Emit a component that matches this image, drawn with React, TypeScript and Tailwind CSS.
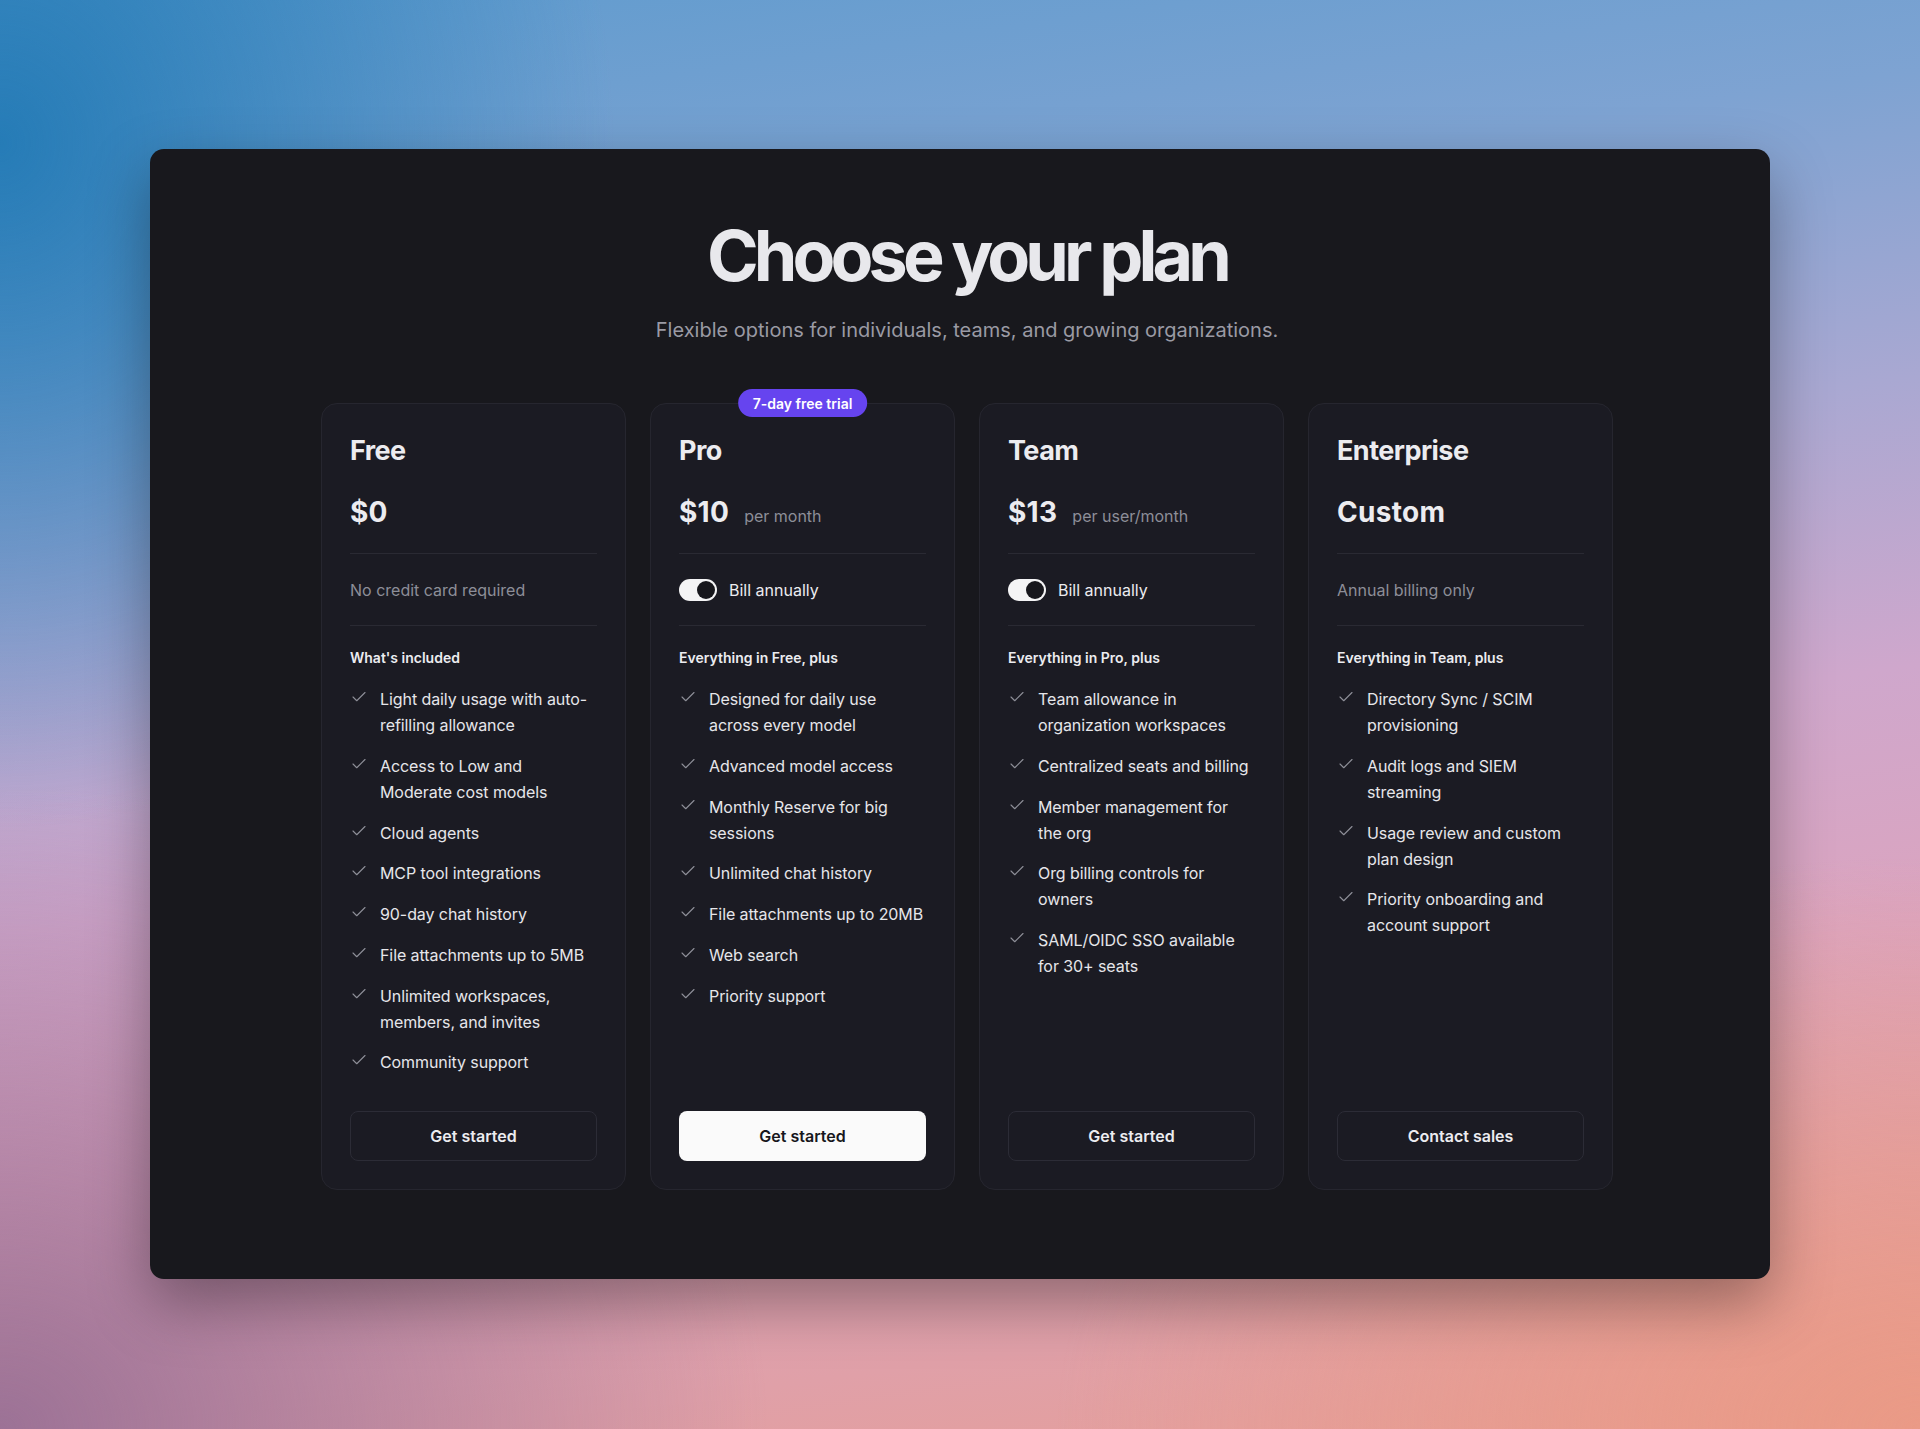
import React from 'react';
import { Check } from 'lucide-react';

interface Plan {
  name: string;
  price: string;
  unit?: string;
  note?: string;
  toggle?: boolean;
  badge?: string;
  heading: string;
  features: string[];
  cta: string;
  primary?: boolean;
}

const plans: Plan[] = [
  {
    name: 'Free',
    price: '$0',
    note: 'No credit card required',
    heading: "What's included",
    features: [
      'Light daily usage with auto-refilling allowance',
      'Access to Low and Moderate cost models',
      'Cloud agents',
      'MCP tool integrations',
      '90-day chat history',
      'File attachments up to 5MB',
      'Unlimited workspaces, members, and invites',
      'Community support',
    ],
    cta: 'Get started',
  },
  {
    name: 'Pro',
    price: '$10',
    unit: 'per month',
    toggle: true,
    badge: '7-day free trial',
    heading: 'Everything in Free, plus',
    features: [
      'Designed for daily use across every model',
      'Advanced model access',
      'Monthly Reserve for big sessions',
      'Unlimited chat history',
      'File attachments up to 20MB',
      'Web search',
      'Priority support',
    ],
    cta: 'Get started',
    primary: true,
  },
  {
    name: 'Team',
    price: '$13',
    unit: 'per user/month',
    toggle: true,
    heading: 'Everything in Pro, plus',
    features: [
      'Team allowance in organization workspaces',
      'Centralized seats and billing',
      'Member management for the org',
      'Org billing controls for owners',
      'SAML/OIDC SSO available for 30+ seats',
    ],
    cta: 'Get started',
  },
  {
    name: 'Enterprise',
    price: 'Custom',
    note: 'Annual billing only',
    heading: 'Everything in Team, plus',
    features: [
      'Directory Sync / SCIM provisioning',
      'Audit logs and SIEM streaming',
      'Usage review and custom plan design',
      'Priority onboarding and account support',
    ],
    cta: 'Contact sales',
  },
];

const PlanCard: React.FC<{ plan: Plan }> = ({ plan }) => {
  return (
    <div className="relative flex flex-col rounded-2xl border border-[#26262f] bg-[#1b1b23] px-[28px] pt-[30px] pb-[28px]">
      {plan.badge && (
        <div className="absolute left-1/2 top-[-15px] -translate-x-1/2 h-[28px] px-[15px] flex items-center rounded-full bg-[#6644ef] text-[14px] font-semibold text-white whitespace-nowrap">
          {plan.badge}
        </div>
      )}
      <h3 className="text-[27px] leading-[34px] font-bold tracking-[-0.02em] text-[#ececf0]">{plan.name}</h3>
      <div className="mt-[27px] mb-[24px] flex items-baseline gap-[15px]">
        <span className="text-[28px] leading-[34px] font-bold tracking-[0.01em] text-[#ececf0]">{plan.price}</span>
        {plan.unit && <span className="text-[16px] text-[#8d8e98]">{plan.unit}</span>}
      </div>
      <div className="border-t border-[#2a2a33] py-[23px] h-[72px] flex items-center">
        {plan.toggle ? (
          <div className="flex items-center gap-3">
            <div className="w-[38px] h-[22px] rounded-full bg-[#f4f4f5] flex items-center justify-end p-[2px]">
              <div className="size-[18px] rounded-full bg-[#17171c]" />
            </div>
            <span className="text-[16px] text-[#ececf0]">Bill annually</span>
          </div>
        ) : (
          <span className="text-[16px] text-[#8d8e98]">{plan.note}</span>
        )}
      </div>
      <div className="flex-1 border-t border-[#2a2a33] pt-[22px]">
        <p className="text-[14px] leading-[20px] font-semibold text-[#ececf0]">{plan.heading}</p>
        <ul className="mt-[18px] flex flex-col gap-[14.75px]">
          {plan.features.map((f) => (
            <li key={f} className="flex items-start gap-3">
              <Check size={18} strokeWidth={1.5} className="mt-[2px] shrink-0 text-[#8e8f98]" />
              <span className="text-[16px] leading-[26px] tracking-[-0.005em] text-[#e6e6ea]">{f}</span>
            </li>
          ))}
        </ul>
      </div>
      <button
        className={
          plan.primary
            ? 'mt-[36px] h-[50px] w-full rounded-lg bg-[#fafafa] text-[16px] font-semibold text-[#17171c]'
            : 'mt-[36px] h-[50px] w-full rounded-lg border border-[#2c2c36] bg-[#1b1b23] text-[16px] font-semibold text-[#ececf0]'
        }
      >
        {plan.cta}
      </button>
    </div>
  );
};

export default function App() {
  return (
    <div className="min-h-[1429px] w-full px-[150px] pt-[149px] pb-[150px] font-['Inter','Liberation_Sans',sans-serif] bg-[image:radial-gradient(ellipse_32%_48%_at_0%_10%,rgba(30,120,180,0.9)_0%,rgba(30,120,180,0)_100%),radial-gradient(ellipse_40%_45%_at_0%_100%,rgba(156,114,150,1)_0%,rgba(156,114,150,0)_100%),radial-gradient(ellipse_45%_40%_at_100%_100%,rgba(234,154,134,1)_0%,rgba(234,154,134,0)_100%),linear-gradient(172deg,#5e9bce_0%,#7ea3d2_20%,#a9a8d2_38%,#cfa7cc_55%,#dba4bf_70%,#e0a0a8_88%,#e69e96_100%)]">
      <div className="rounded-[14px] bg-[#18181d] pt-[71px] pb-[89px] pl-[171px] pr-[157px] shadow-[0_24px_60px_rgba(0,0,0,0.35)]">
        <h1 className="text-center text-[70px] leading-[72px] font-bold tracking-[-0.07em] text-[#e8e8ec]">
          Choose your plan
        </h1>
        <p className="mt-[24px] text-center text-[20px] leading-[28px] text-[#9a9aa4]">
          Flexible options for individuals, teams, and growing organizations.
        </p>
        <div className="mt-[59px] grid grid-cols-4 gap-6">
          {plans.map((p) => (
            <PlanCard key={p.name} plan={p} />
          ))}
        </div>
      </div>
    </div>
  );
}
